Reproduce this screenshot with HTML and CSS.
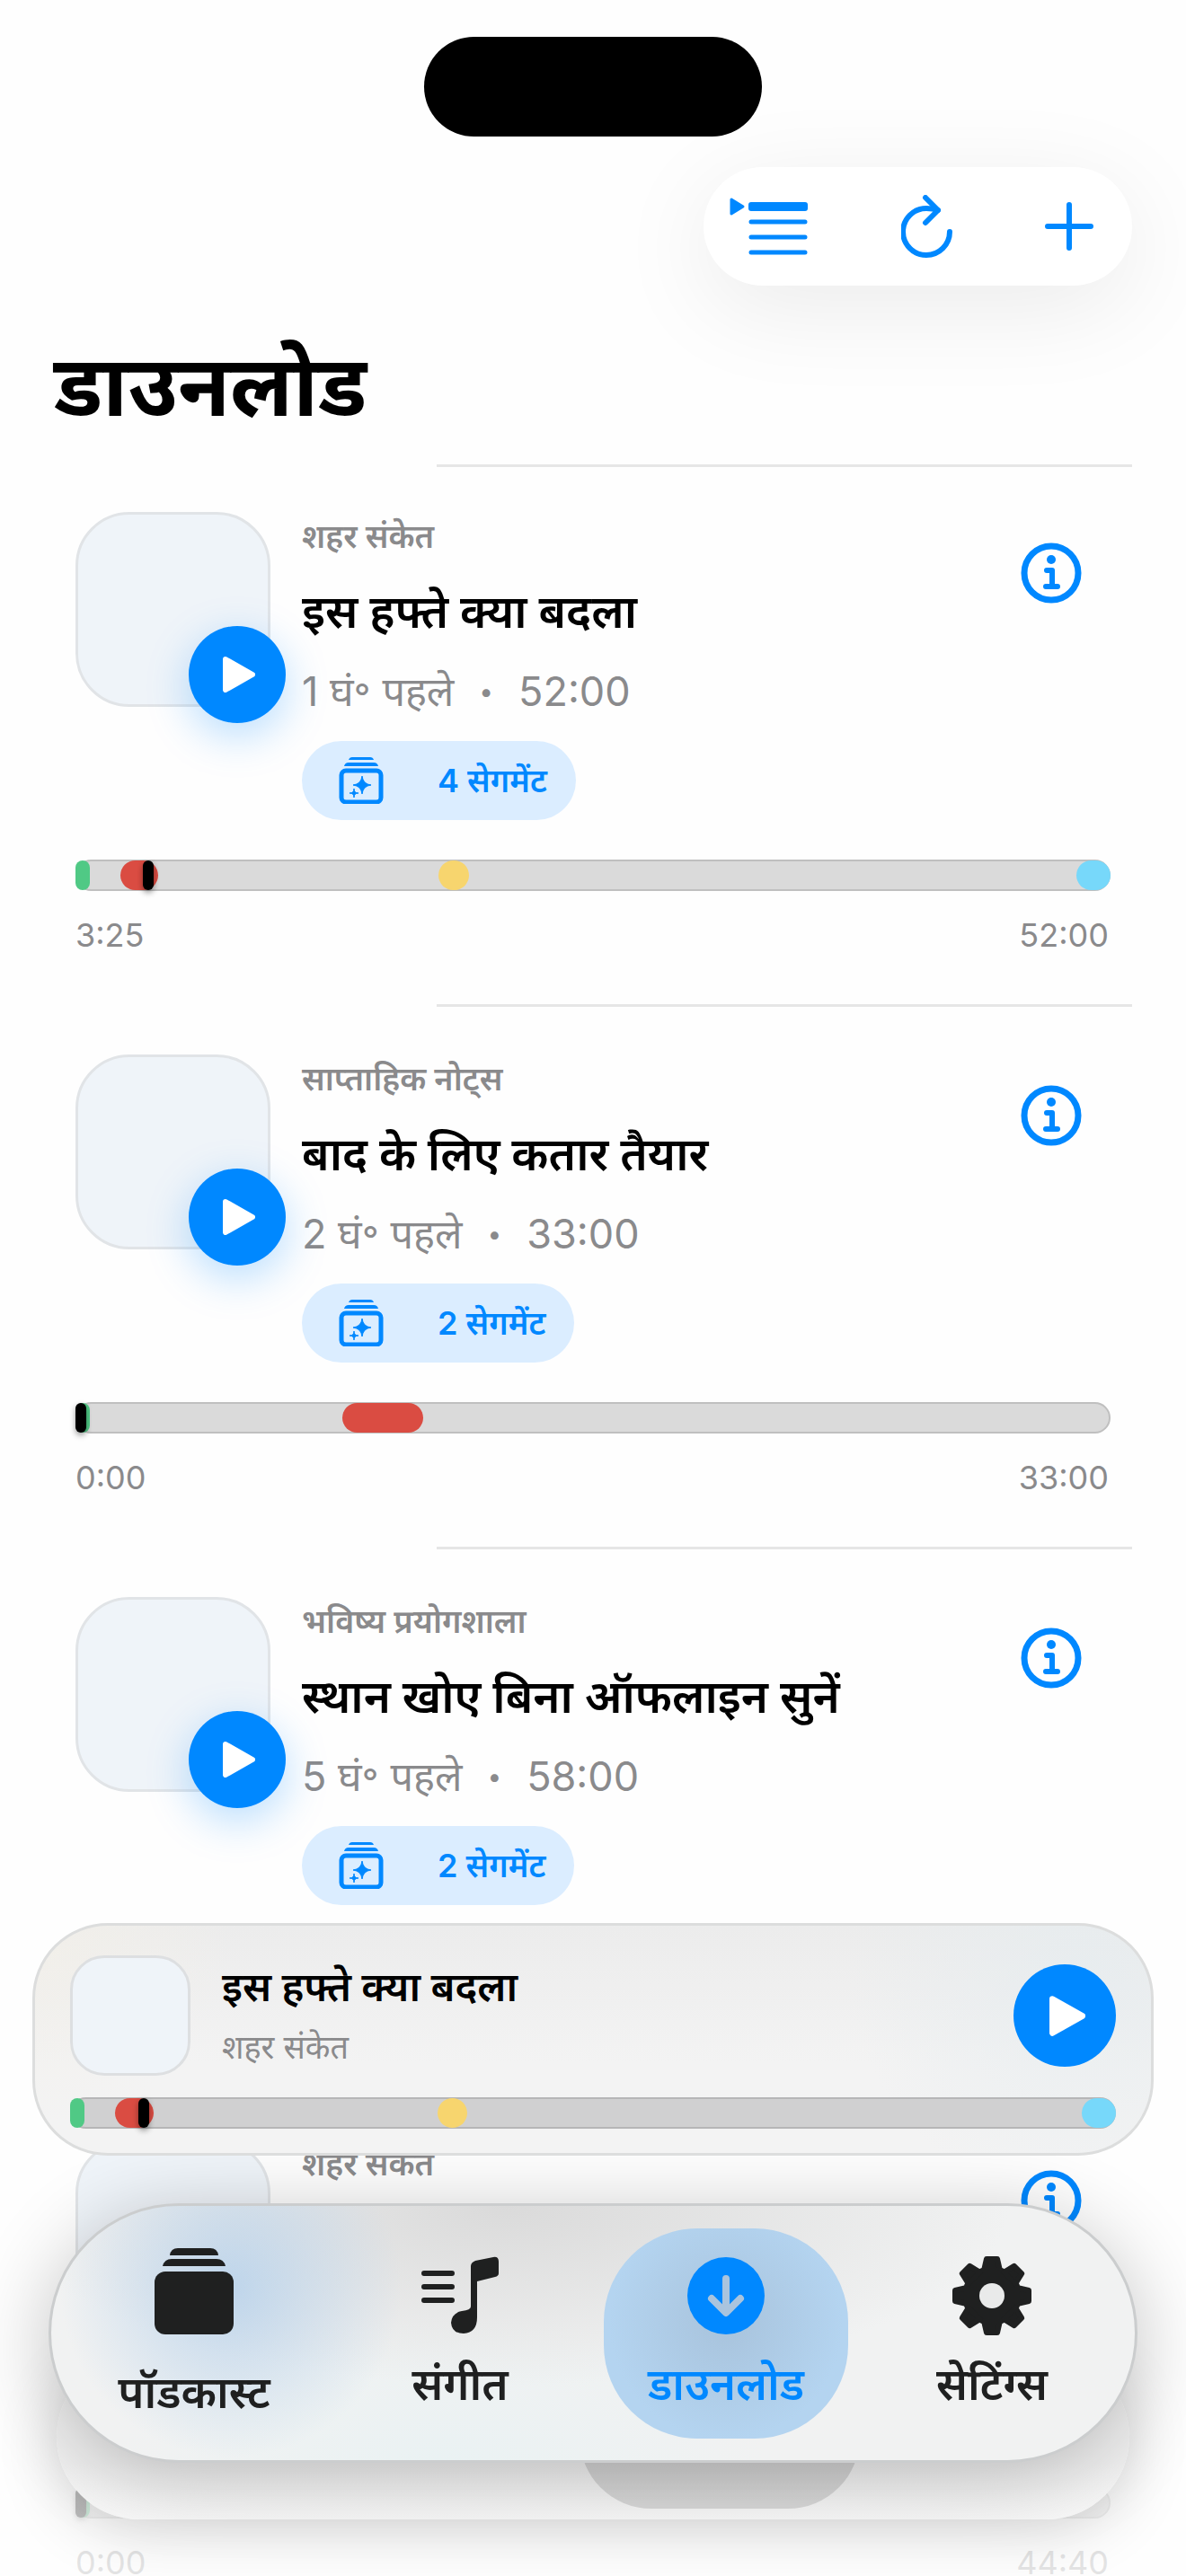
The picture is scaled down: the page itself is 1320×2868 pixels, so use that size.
FILE: index.html
```html
<!DOCTYPE html>
<html lang="hi">

  <head>
    <meta charset="UTF-8">
    <meta name="viewport" content="width=device-width, initial-scale=1.0">
    <title>डाउनलोड</title>
    <link rel="stylesheet" href="styles.css">
  </head>

  <body>
    <!-- shared icons -->
    <svg class="sprite" aria-hidden="true">
      <symbol id="icon-play" viewBox="0 0 36 40">
        <path d="M3 3 L33 20 L3 37 Z" fill="currentColor" stroke="currentColor" stroke-width="6" stroke-linejoin="round" />
      </symbol>
      <symbol id="icon-info" viewBox="0 0 68 68">
        <circle cx="34" cy="34" r="30" fill="none" stroke="currentColor" stroke-width="7" />
        <circle cx="34" cy="19" r="5" fill="currentColor" />
        <path d="M29 31 H35 V49 M28 49 H41" fill="none" stroke="currentColor" stroke-width="6" stroke-linecap="round" stroke-linejoin="round" />
      </symbol>
      <symbol id="icon-segments" viewBox="0 0 50 52">
        <path d="M11 3 Q12 0 15 0 H35 Q38 0 39 3 Z M6 10 Q7 6 11 6 H39 Q43 6 44 10 Z" fill="currentColor" />
        <rect x="3" y="15" width="44" height="35" rx="5" fill="none" stroke="currentColor" stroke-width="5" />
        <path d="M26 21 Q27 30 36 31 Q27 32 26 41 Q25 32 16 31 Q25 30 26 21 Z M17 35 Q17 40 22 40 Q17 40 17 45 Q17 40 12 40 Q17 40 17 35 Z" fill="currentColor" stroke="currentColor" stroke-width="1" />
      </symbol>
    </svg>

    <div class="app">
      <header class="header">
        <div class="island"></div>
        <div class="toolbar">
          <button class="tool" aria-label="कतार">
            <svg width="88" height="66" viewBox="0 0 88 66">
              <path d="M2 3 L15 11 L2 19 Z" stroke="currentColor" stroke-width="3" stroke-linejoin="round" fill="currentColor" />
              <rect x="21" y="6" width="66" height="10" rx="3" fill="currentColor" />
              <path d="M24 28 H84 M24 45 H84 M24 62 H84" stroke="currentColor" stroke-width="5" stroke-linecap="round" />
            </svg>
          </button>
          <button class="tool" aria-label="रीफ़्रेश">
            <svg width="58" height="70" viewBox="0 0 58 70">
              <path d="M54 41 A26 26 0 1 1 28 15 Q35 15 41 17" fill="none" stroke="currentColor" stroke-width="6" stroke-linecap="round" />
              <path d="M27 3 L41 17 L27 31" fill="none" stroke="currentColor" stroke-width="6" stroke-linecap="round" stroke-linejoin="round" />
            </svg>
          </button>
          <button class="tool" aria-label="जोड़ें">
            <svg width="54" height="54" viewBox="0 0 54 54">
              <path d="M27 3 V51 M3 27 H51" stroke="currentColor" stroke-width="6" stroke-linecap="round" />
            </svg>
          </button>
        </div>
        <h1 class="page-title">डाउनलोड</h1>
      </header>

      <main class="episodes">
        <article class="episode">
          <div class="episode-top">
            <div class="art">
              <button class="play" aria-label="चलाएँ"><svg><use href="#icon-play" /></svg></button>
            </div>
            <div class="info">
              <p class="show">शहर संकेत</p>
              <h2 class="name">इस हफ्ते क्या बदला</h2>
              <p class="meta"><span>1 घं॰ पहले</span><span class="dot">•</span><span>52:00</span></p>
              <button class="segments"><svg><use href="#icon-segments" /></svg>4 सेगमेंट</button>
            </div>
            <button class="details" aria-label="जानकारी"><svg><use href="#icon-info" /></svg></button>
          </div>
          <div class="timeline">
            <span class="seg green" style="left: 0; width: 1.4%"></span>
            <span class="seg red" style="left: 4.3%; width: 3.7%"></span>
            <span class="seg yellow" style="left: 35.1%; width: 2.9%"></span>
            <span class="seg blue" style="left: 96.7%; width: 3.3%"></span>
            <input type="range" min="0" max="3120" value="205" aria-label="प्लेबैक स्थिति">
          </div>
          <div class="times"><span>3:25</span><span>52:00</span></div>
        </article>

        <article class="episode">
          <div class="episode-top">
            <div class="art">
              <button class="play" aria-label="चलाएँ"><svg><use href="#icon-play" /></svg></button>
            </div>
            <div class="info">
              <p class="show">साप्ताहिक नोट्स</p>
              <h2 class="name">बाद के लिए कतार तैयार</h2>
              <p class="meta"><span>2 घं॰ पहले</span><span class="dot">•</span><span>33:00</span></p>
              <button class="segments"><svg><use href="#icon-segments" /></svg>2 सेगमेंट</button>
            </div>
            <button class="details" aria-label="जानकारी"><svg><use href="#icon-info" /></svg></button>
          </div>
          <div class="timeline">
            <span class="seg green" style="left: 0; width: 1.4%"></span>
            <span class="seg red" style="left: 25.8%; width: 7.8%"></span>
            <input type="range" min="0" max="1980" value="0" aria-label="प्लेबैक स्थिति">
          </div>
          <div class="times"><span>0:00</span><span>33:00</span></div>
        </article>

        <article class="episode">
          <div class="episode-top">
            <div class="art">
              <button class="play" aria-label="चलाएँ"><svg><use href="#icon-play" /></svg></button>
            </div>
            <div class="info">
              <p class="show">भविष्य प्रयोगशाला</p>
              <h2 class="name">स्थान खोए बिना ऑफलाइन सुनें</h2>
              <p class="meta"><span>5 घं॰ पहले</span><span class="dot">•</span><span>58:00</span></p>
              <button class="segments"><svg><use href="#icon-segments" /></svg>2 सेगमेंट</button>
            </div>
            <button class="details" aria-label="जानकारी"><svg><use href="#icon-info" /></svg></button>
          </div>
          <div class="timeline"></div>
          <div class="times"></div>
        </article>

        <article class="episode">
          <div class="episode-top">
            <div class="art"></div>
            <div class="info">
              <p class="show">शहर संकेत</p>
            </div>
            <button class="details" aria-label="जानकारी"><svg><use href="#icon-info" /></svg></button>
          </div>
          <div class="timeline">
            <span class="seg green" style="left: 0; width: 1.4%"></span>
            <input type="range" min="0" max="2680" value="0" aria-label="प्लेबैक स्थिति">
          </div>
          <div class="times"><span>0:00</span><span>44:40</span></div>
        </article>
      </main>

      <div class="fade"></div>

      <footer class="dock">
        <section class="player">
          <div class="player-top">
            <div class="player-art"></div>
            <div class="player-info">
              <h2 class="player-name">इस हफ्ते क्या बदला</h2>
              <p class="player-show">शहर संकेत</p>
            </div>
            <button class="player-play" aria-label="चलाएँ"><svg><use href="#icon-play" /></svg></button>
          </div>
          <div class="timeline">
            <span class="seg green" style="left: 0; width: 1.4%"></span>
            <span class="seg red" style="left: 4.3%; width: 3.7%"></span>
            <span class="seg yellow" style="left: 35.1%; width: 2.9%"></span>
            <span class="seg blue" style="left: 96.7%; width: 3.3%"></span>
            <input type="range" min="0" max="3120" value="205" aria-label="प्लेबैक स्थिति">
          </div>
        </section>

        <div class="tabs-wrap">
          <div class="reflection"></div>
          <nav class="tabs">
            <a class="tab" href="#podcasts">
              <svg width="88" height="106" viewBox="0 0 88 106">
                <path d="M17 8 Q18 0 26 0 H62 Q70 0 71 8 Z M9 20 Q11 12 19 12 H69 Q77 12 79 20 Z" fill="currentColor" />
                <rect y="26" width="88" height="70" rx="12" fill="currentColor" />
              </svg>
              पॉडकास्ट
            </a>
            <a class="tab" href="#music">
              <svg width="86" height="88" viewBox="0 0 86 88">
                <path d="M3 19 H34 M3 34 H34 M3 49 H34" stroke="currentColor" stroke-width="6" stroke-linecap="round" />
                <path d="M55 11 Q55 7 60 5 L80 1 Q86 0 86 6 V19 Q86 22 82 23 L62 28 V68 Q62 85 47 86 Q34 86 33 74 Q34 63 45 61 Q55 60 55 56 Z" fill="currentColor" />
              </svg>
              संगीत
            </a>
            <a class="tab active" href="#downloads">
              <svg width="88" height="88" viewBox="0 0 88 88">
                <circle cx="44" cy="44" r="43" fill="currentColor" />
                <path d="M44 25 V62 M28 47 L44 63 L60 47" fill="none" stroke="#a9c4de" stroke-width="8" stroke-linecap="round" stroke-linejoin="round" />
              </svg>
              डाउनलोड
            </a>
            <a class="tab" href="#settings">
              <svg width="88" height="88" viewBox="0 0 88 88">
                <g fill="currentColor">
                  <circle cx="44" cy="44" r="33" />
                  <g stroke="currentColor" stroke-width="6" stroke-linejoin="round">
                    <path id="tooth" d="M38 3 H50 L53 16 H35 Z" />
                    <use href="#tooth" transform="rotate(45 44 44)" />
                    <use href="#tooth" transform="rotate(90 44 44)" />
                    <use href="#tooth" transform="rotate(135 44 44)" />
                    <use href="#tooth" transform="rotate(180 44 44)" />
                    <use href="#tooth" transform="rotate(225 44 44)" />
                    <use href="#tooth" transform="rotate(270 44 44)" />
                    <use href="#tooth" transform="rotate(315 44 44)" />
                  </g>
                </g>
                <circle cx="44" cy="44" r="14" fill="#e9eaea" />
              </svg>
              सेटिंग्स
            </a>
          </nav>
        </div>
      </footer>
    </div>
  </body>

</html>
```
FILE: styles.css
```css
:root {
  --blue: #0088ff;
  --gray: #8a8a8c;
  --art: #eff4f9;
}

* {
  box-sizing: border-box;
}

body {
  margin: 0;
  background: #fefefe;
  color: #000;
  font-family: Inter, "Noto Sans Devanagari", "Noto Sans", sans-serif;
}

h1,
h2,
p {
  margin: 0;
}

button {
  padding: 0;
  border: none;
  background: none;
  color: var(--blue);
  font: inherit;
  cursor: pointer;
}

svg {
  display: block;
}

.sprite {
  position: absolute;
  width: 0;
  height: 0;
}

.app {
  position: relative;
  height: 100vh;
  overflow: hidden;
}

/* header */
.header {
  display: flex;
  flex-direction: column;
  padding: 41px 60px 0;
}

.island {
  align-self: center;
  width: 376px;
  height: 111px;
  border-radius: 56px;
  background: #000;
}

.toolbar {
  align-self: flex-end;
  display: flex;
  align-items: center;
  justify-content: space-between;
  width: 477px;
  height: 132px;
  margin-top: 34px;
  padding: 0 43px 0 29px;
  border-radius: 66px;
  background: #fff;
  box-shadow: 0 24px 110px rgba(0, 0, 0, 0.08);
}

.page-title {
  height: 199px;
  padding-top: 36px;
  font-size: 95px;
  line-height: 150px;
  font-weight: 700;
}

/* episode list */
.episode {
  position: relative;
  height: 604px;
  padding: 53px 84px 0;
}

.episode::before {
  content: "";
  position: absolute;
  top: 0;
  left: 486px;
  right: 60px;
  height: 3px;
  background: #e6e6e6;
}

.episode + .episode::before {
  top: -3px;
}

.episode-top {
  display: flex;
  align-items: flex-start;
  height: 387px;
}

.art {
  position: relative;
  flex: none;
  width: 217px;
  height: 217px;
  border: 3px solid #e1e4e7;
  border-radius: 60px;
  background: var(--art);
}

.play {
  position: absolute;
  right: -20px;
  bottom: -21px;
  display: grid;
  place-items: center;
  width: 108px;
  height: 108px;
  border-radius: 50%;
  background: var(--blue);
  color: #fff;
  box-shadow: 0 14px 48px rgba(0, 136, 255, 0.28);
}

.play svg {
  width: 36px;
  height: 40px;
  margin-left: 4px;
}

.info {
  flex: 1;
  display: flex;
  flex-direction: column;
  align-items: flex-start;
  margin-left: 35px;
}

.show {
  color: var(--gray);
  font-size: 36px;
  line-height: 54px;
  font-weight: 600;
}

.name {
  margin-top: 17px;
  font-size: 51px;
  line-height: 80px;
  font-weight: 600;
}

.meta {
  display: flex;
  gap: 28px;
  margin-top: 17px;
  color: var(--gray);
  font-size: 45px;
  line-height: 64px;
}

.dot {
  font-size: 28px;
}

.segments {
  display: flex;
  align-items: center;
  height: 88px;
  margin-top: 23px;
  padding: 0 32px 0 41px;
  border-radius: 44px;
  background: #dbedff;
  font-size: 36px;
  line-height: 44px;
  font-weight: 600;
}

.segments svg {
  width: 50px;
  height: 52px;
  margin-right: 60px;
}

.details {
  margin: 34px 32px 0 0;
}

.details svg {
  width: 68px;
  height: 68px;
}

.timeline {
  position: relative;
  height: 35px;
  border-radius: 18px;
  background: #dadada;
  box-shadow: inset 0 0 0 2px rgba(0, 0, 0, 0.12);
}

.seg {
  position: absolute;
  top: 1px;
  bottom: 1px;
  border-radius: 17px;
}

.green {
  background: #50c985;
}

.red {
  background: #da4c42;
}

.yellow {
  background: #f7d56e;
}

.blue {
  background: #77d8fa;
}

.timeline input {
  position: absolute;
  inset: 0;
  width: 100%;
  height: 100%;
  margin: 0;
  background: none;
  appearance: none;
}

.timeline input::-webkit-slider-thumb {
  width: 12px;
  height: 33px;
  border-radius: 6px;
  background: #000;
  box-shadow: 0 3px 6px rgba(0, 0, 0, 0.4);
  appearance: none;
}

.times {
  display: flex;
  justify-content: space-between;
  margin-top: 34px;
  padding-right: 2px;
  color: var(--gray);
  font-size: 36px;
  line-height: 30px;
}

/* list fades out towards the bottom edge */
.fade {
  position: absolute;
  left: 0;
  right: 0;
  bottom: 0;
  height: 230px;
  background: linear-gradient(rgba(254, 254, 254, 0), rgba(254, 254, 254, 0.72) 40%, rgba(254, 254, 254, 0.78));
}

/* player and tab bar */
.dock {
  position: absolute;
  left: 0;
  right: 0;
  bottom: 0;
  display: flex;
  flex-direction: column;
  gap: 53px;
  padding: 0 36px 126px;
}

.player {
  position: relative;
  z-index: 1;
  padding: 33px 39px 27px;
  border: 3px solid #dcdddd;
  border-radius: 84px;
  background:
    radial-gradient(circle at 0 0, rgba(243, 240, 233, 0.8), transparent 220px),
    radial-gradient(circle at 94% 20%, rgba(230, 236, 239, 0.8), transparent 260px),
    linear-gradient(#ececec, #f3f3f3 60%);
}

.player-top {
  display: flex;
  align-items: center;
}

.player-art {
  width: 134px;
  height: 134px;
  border: 3px solid #dddfe1;
  border-radius: 38px;
  background: var(--art);
}

.player-info {
  flex: 1;
  margin-left: 35px;
}

.player-name {
  font-size: 45px;
  line-height: 70px;
  font-weight: 600;
}

.player-show {
  color: var(--gray);
  font-size: 36px;
  line-height: 64px;
}

.player-play {
  display: grid;
  place-items: center;
  width: 114px;
  height: 114px;
  border-radius: 50%;
  background: var(--blue);
  color: #fff;
}

.player-play svg {
  width: 40px;
  height: 45px;
  margin-left: 5px;
}

.player .timeline {
  margin-top: 24px;
  background: #d0d0d1;
}

.tabs-wrap {
  position: relative;
  margin: 0 18px;
}

.tabs {
  position: relative;
  display: grid;
  grid-template-columns: repeat(4, 1fr);
  align-items: center;
  height: 289px;
  padding: 0 11px;
  border: 3px solid #cbcdce;
  border-radius: 145px;
  background:
    radial-gradient(circle at 200px 90px, rgba(188, 212, 235, 0.95), transparent 190px),
    radial-gradient(ellipse 560px 200px at 42% 0, #dadada, transparent),
    radial-gradient(ellipse 360px 160px at 36% 100%, #eaf2f3, transparent),
    #f1f2f2;
  box-shadow: 0 16px 90px rgba(0, 0, 0, 0.24);
}

.tab {
  display: flex;
  flex-direction: column;
  align-items: center;
  justify-content: center;
  gap: 18px;
  height: 234px;
  padding-top: 8px;
  border-radius: 104px;
  color: #1f2020;
  font-size: 49px;
  line-height: 74px;
  font-weight: 600;
  text-decoration: none;
}

.tab.active {
  margin: 0 12px;
  background: radial-gradient(circle at 50% 45%, #a8c3dc, #b4d4f0 130px);
  color: var(--blue);
}

/* glass reflection peeking out under the tab bar */
.reflection {
  position: absolute;
  left: 9px;
  right: 9px;
  bottom: -63px;
  height: 184px;
  border-radius: 92px;
  background: linear-gradient(#f2f2f2 66%, #f9f9f9);
  box-shadow: 0 10px 70px rgba(0, 0, 0, 0.16);
  overflow: hidden;
}

.reflection::after {
  content: "";
  position: absolute;
  left: 582px;
  bottom: 12px;
  width: 312px;
  height: 160px;
  border-radius: 90px;
  background: rgba(0, 0, 0, 0.12);
}
```
